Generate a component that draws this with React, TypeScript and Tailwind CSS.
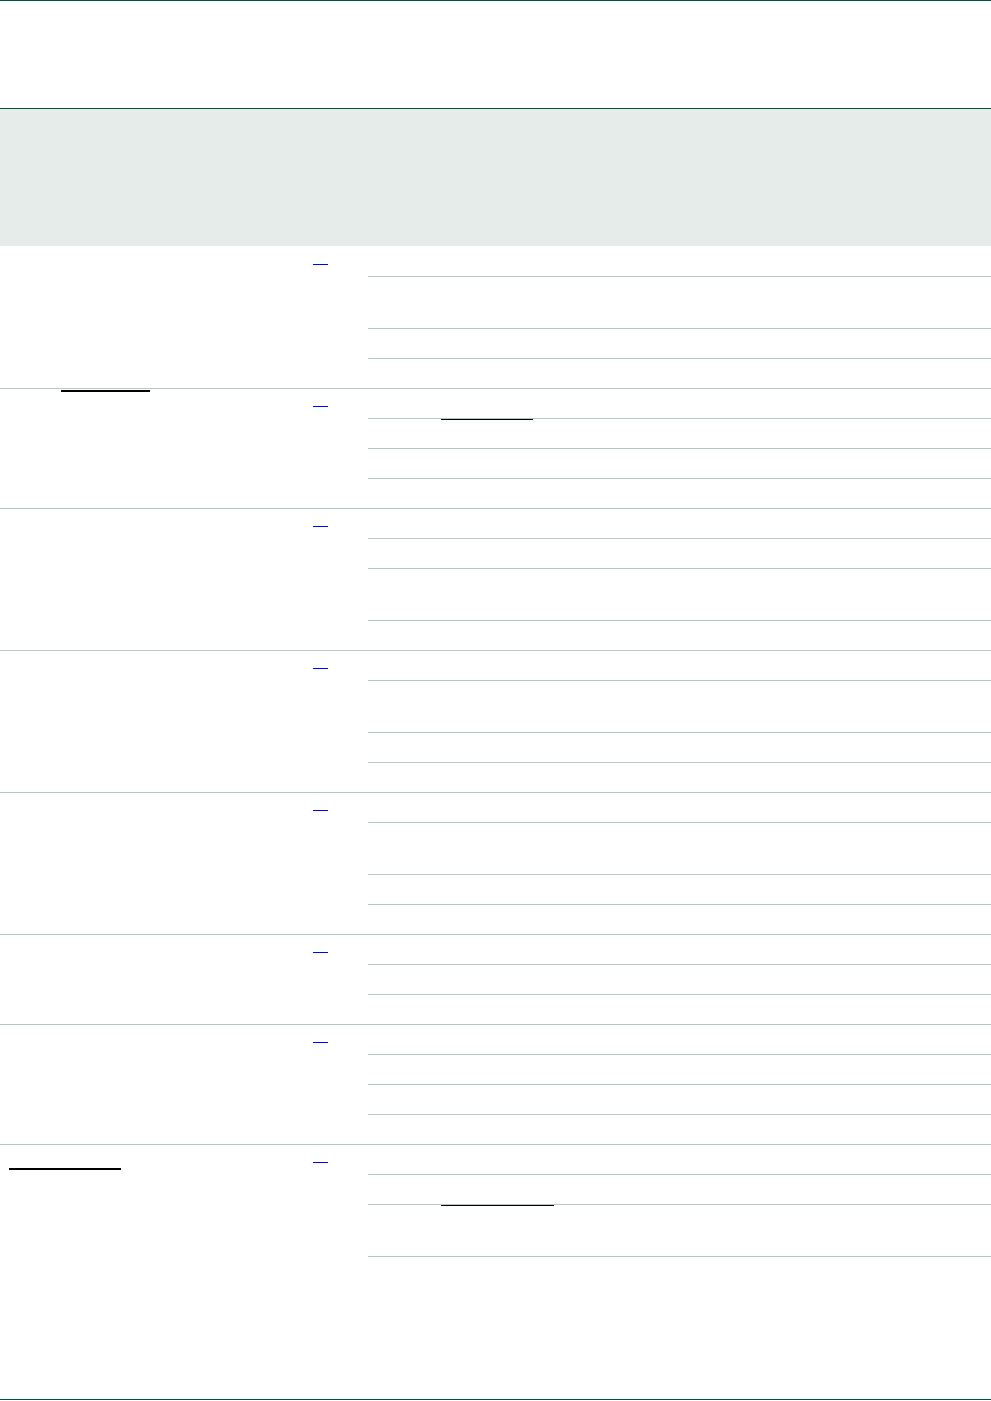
import React from "react";

type Row = { h: "s" | "d" | "fill"; ul?: number };
type Group = { rows: Row[]; leftUl?: { ml: string; mt: string; w: string } };

const groups: Group[] = [
  { rows: [{ h: "s" }, { h: "d" }, { h: "s" }, { h: "s" }] },
  {
    rows: [{ h: "s" }, { h: "s", ul: 92 }, { h: "s" }, { h: "s" }],
    leftUl: { ml: "ml-[61px]", mt: "mt-[1px]", w: "w-[89px]" },
  },
  { rows: [{ h: "s" }, { h: "s" }, { h: "d" }, { h: "s" }] },
  { rows: [{ h: "s" }, { h: "d" }, { h: "s" }, { h: "s" }] },
  { rows: [{ h: "s" }, { h: "d" }, { h: "s" }, { h: "s" }] },
  { rows: [{ h: "s" }, { h: "s" }, { h: "s" }] },
  { rows: [{ h: "s" }, { h: "s" }, { h: "s" }, { h: "s" }] },
  {
    rows: [{ h: "s" }, { h: "s" }, { h: "d", ul: 113 }, { h: "fill" }],
    leftUl: { ml: "ml-[9px]", mt: "mt-[23px]", w: "w-[112px]" },
  },
];

function SubRow({ row, last }: { row: Row; last: boolean }) {
  let cls = "";
  if (row.h === "fill") cls = "flex-1";
  else if (row.h === "s") cls = last ? "h-[29px]" : "h-[30px] border-b border-[#b7c9c4]";
  else cls = last ? "h-[51px]" : "h-[52px] border-b border-[#b7c9c4]";
  return (
    <div className={cls}>
      {row.ul === 92 && <div className="ml-[73px] w-[92px] h-px bg-black" />}
      {row.ul === 113 && <div className="ml-[73px] w-[113px] h-px bg-black" />}
    </div>
  );
}

function GroupRow({ g, fill }: { g: Group; fill: boolean }) {
  return (
    <div className={fill ? "flex flex-1" : "flex border-b border-[#b7c9c4]"}>
      <div className="w-[300px] shrink-0">
        {g.leftUl && (
          <div className={`${g.leftUl.ml} ${g.leftUl.mt} ${g.leftUl.w} h-[2px] bg-black`} />
        )}
      </div>
      <div className="w-[68px] shrink-0 pt-[17px] pl-[13px]">
        <div className="w-[15px] h-px bg-[#0000ff]" />
      </div>
      <div className="flex-1 flex flex-col">
        {g.rows.map((r, i) => (
          <SubRow key={i} row={r} last={i === g.rows.length - 1} />
        ))}
      </div>
    </div>
  );
}

export default function App() {
  return (
    <div className="w-[991px] h-[1401px] bg-white flex flex-col font-['Liberation_Sans',Arial,sans-serif]">
      <div className="h-px bg-[#00553d]" />
      <div className="h-[107px]" />
      <div className="h-px bg-[#00553d]" />
      <div className="h-[137px] bg-[#e6ecea]" />
      <div className="h-px" />
      {groups.map((g, i) => (
        <GroupRow key={i} g={g} fill={i === groups.length - 1} />
      ))}
      <div className="h-px bg-[#00553d]" />
      <div className="h-px" />
    </div>
  );
}
